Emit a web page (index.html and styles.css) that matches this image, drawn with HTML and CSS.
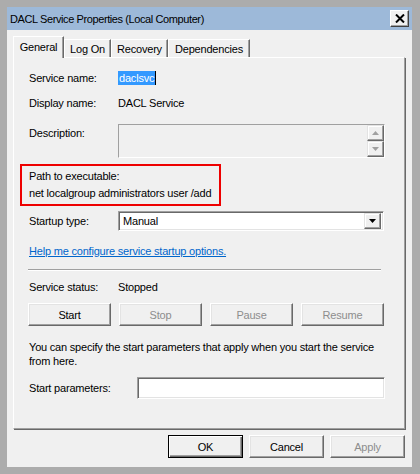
FILE: index.html
```html
<!DOCTYPE html>
<html>
<head>
<meta charset="utf-8">
<title>DACL Service Properties</title>
<link rel="stylesheet" href="styles.css">
</head>
<body>
<div class="window">
  <div class="titlebar">
    <span class="title">DACL Service Properties (Local Computer)</span>
    <span class="close"><svg width="10" height="9" viewBox="0 0 10 9"><path d="M1 0.5 L9 8.5 M9 0.5 L1 8.5" stroke="#000" stroke-width="2" fill="none"/></svg></span>
  </div>
  <div class="client">
    <div class="tabs">
      <div class="tab active t-general">General</div>
      <div class="tab t-logon">Log On</div>
      <div class="tab t-recovery">Recovery</div>
      <div class="tab t-deps">Dependencies</div>
    </div>
    <div class="page">
      <div class="row r-name">
        <span class="lbl">Service name:</span>
        <span class="sel">daclsvc</span>
      </div>
      <div class="row r-display">
        <span class="lbl">Display name:</span>
        <span>DACL Service</span>
      </div>
      <div class="row r-desc">
        <span class="lbl desc-lbl">Description:</span>
        <div class="descbox">
          <div class="spin">
            <span class="sbtn"><svg width="7" height="4" viewBox="0 0 7 4"><path d="M3.5 0 L7 4 L0 4 Z" fill="#a0a0a0"/></svg></span>
            <span class="sbtn"><svg width="7" height="4" viewBox="0 0 7 4"><path d="M0 0 L7 0 L3.5 4 Z" fill="#a0a0a0"/></svg></span>
          </div>
        </div>
      </div>
      <div class="redbox">
        <div>Path to executable:</div>
        <div>net localgroup administrators user /add</div>
      </div>
      <div class="row r-startup">
        <span class="lbl">Startup type:</span>
        <div class="combo">
          <span class="combo-text">Manual</span>
          <span class="combo-btn"><svg width="7" height="4" viewBox="0 0 7 4"><path d="M0 0 L7 0 L3.5 4 Z" fill="#000"/></svg></span>
        </div>
      </div>
      <div class="link">Help me configure service startup options.</div>
      <div class="sep"></div>
      <div class="row r-status">
        <span class="lbl">Service status:</span>
        <span>Stopped</span>
      </div>
      <div class="svc-btns">
        <span class="btn">Start</span>
        <span class="btn disabled">Stop</span>
        <span class="btn disabled">Pause</span>
        <span class="btn disabled">Resume</span>
      </div>
      <p class="para">You can specify the start parameters that apply when you start the service from here.</p>
      <div class="row r-params">
        <span class="lbl lbl-wide">Start parameters:</span>
        <div class="edit"></div>
      </div>
    </div>
    <div class="actions">
      <span class="btn dlg default">OK</span>
      <span class="btn dlg">Cancel</span>
      <span class="btn dlg disabled">Apply</span>
    </div>
  </div>
</div>
</body>
</html>
```

FILE: styles.css
```css
* { box-sizing: border-box; }
html, body { margin: 0; padding: 0; }
body {
  width: 420px;
  height: 474px;
  overflow: hidden;
  background: #acacac;
  font-family: "Liberation Sans", Arial, sans-serif;
  font-size: 11px;
  letter-spacing: -0.2px;
  color: #000;
}
.window {
  width: 420px;
  height: 474px;
  padding: 7px 8px 7px 7px;
  background: #acacac;
  display: flex;
  flex-direction: column;
}
.titlebar {
  height: 23px;
  flex: none;
  background: #9db9d9;
  display: flex;
  align-items: center;
  justify-content: space-between;
  padding: 0 3px 0 3px;
}
.title {
  font-size: 11px;
  letter-spacing: -0.4px;
}
.close {
  width: 19px;
  height: 17px;
  background: #f0f0f0;
  border: 1px solid;
  border-color: #fff #404040 #404040 #fff;
  box-shadow: inset -1px -1px 0 #a0a0a0;
  display: flex;
  align-items: center;
  justify-content: center;
}
.client {
  flex: 1;
  background: #f0f0f0;
  padding: 6px 7px 0 6px;
  display: flex;
  flex-direction: column;
}
.tabs {
  display: flex;
  align-items: flex-end;
  height: 21px;
  flex: none;
}
.tab {
  height: 18px;
  display: flex;
  align-items: center;
  justify-content: center;
  border: 1px solid;
  border-bottom: none;
  border-color: #fff #696969 transparent #fff;
  box-shadow: inset -1px 0 0 #a0a0a0;
  background: #f0f0f0;
}
.tab.active {
  height: 22px;
  margin-bottom: -1px;
  position: relative;
  z-index: 1;
  padding-bottom: 2px;
}
.t-general { width: 51px; }
.t-logon { width: 47px; }
.t-recovery { width: 57px; }
.t-deps { width: 82px; }
.page {
  height: 372px;
  flex: none;
  border: 1px solid;
  border-color: #fff #a0a0a0 #a0a0a0 #fff;
  box-shadow: 1px 1px 0 #696969;
  padding: 12px 20px 0 15px;
  display: flex;
  flex-direction: column;
}
.row {
  display: flex;
  align-items: center;
}
.lbl {
  width: 89px;
  flex: none;
}
.lbl-wide { width: 108px; }
.r-name { height: 16px; }
.sel {
  background: #3399ff;
  color: #fff;
  padding: 1px 1px 1px 1px;
  border-right: 1px solid #000;
}
.r-display { height: 16px; margin-top: 9px; }
.r-desc { height: 34px; margin-top: 13px; align-items: flex-start; }
.desc-lbl { padding-top: 2px; line-height: 14px; }
.descbox {
  width: 267px;
  height: 34px;
  flex: none;
  background: #f0f0f0;
  border: 1px solid;
  border-color: #a0a0a0 #fff #fff #a0a0a0;
  display: flex;
  justify-content: flex-end;
}
.spin {
  display: flex;
  flex-direction: column;
}
.sbtn {
  width: 17px;
  height: 16px;
  background: #f0f0f0;
  border: 1px solid;
  border-color: #e3e3e3 #696969 #696969 #e3e3e3;
  box-shadow: inset -1px -1px 0 #a0a0a0, inset 1px 1px 0 #fff;
  display: flex;
  align-items: center;
  justify-content: center;
}
.redbox {
  margin-top: 6px;
  margin-left: -9px;
  width: 201px;
  border: 2px solid #ee0000;
  padding: 2px 0 2px 7px;
  line-height: 17px;
}
.r-startup { height: 20px; margin-top: 5px; }
.combo {
  width: 266px;
  height: 20px;
  flex: none;
  background: #fff;
  border: 1px solid;
  border-color: #a0a0a0 #fff #fff #a0a0a0;
  box-shadow: inset 1px 1px 0 #696969, inset -1px -1px 0 #e3e3e3;
  display: flex;
  align-items: center;
  justify-content: space-between;
  padding: 0 2px 0 4px;
}
.combo-btn {
  width: 17px;
  height: 16px;
  background: #f0f0f0;
  border: 1px solid;
  border-color: #e3e3e3 #696969 #696969 #e3e3e3;
  box-shadow: inset -1px -1px 0 #a0a0a0, inset 1px 1px 0 #fff;
  display: flex;
  align-items: center;
  justify-content: center;
}
.link {
  margin-top: 13px;
  line-height: 14px;
  color: #0066cc;
  text-decoration: underline;
}
.sep {
  margin-top: 11px;
  margin-left: -1px;
  width: 353px;
  height: 2px;
  border-top: 1px solid #a0a0a0;
  border-bottom: 1px solid #fff;
}
.r-status { height: 14px; margin-top: 9px; }
.svc-btns {
  margin-top: 9px;
  margin-left: -1px;
  width: 356px;
  height: 23px;
  display: flex;
  justify-content: space-between;
}
.btn {
  width: 83px;
  height: 23px;
  display: flex;
  align-items: center;
  justify-content: center;
  background: #f0f0f0;
  border: 1px solid;
  border-color: #fff #696969 #696969 #fff;
  box-shadow: inset -1px -1px 0 #a0a0a0, inset 1px 1px 0 #e3e3e3;
}
.btn.disabled { color: #8d8d8d; }
.para {
  margin: 14px 0 0 0;
  line-height: 14px;
}
.r-params { height: 22px; margin-top: 9px; }
.edit {
  width: 248px;
  height: 22px;
  flex: none;
  background: #fff;
  border: 1px solid;
  border-color: #a0a0a0 #fff #fff #a0a0a0;
  box-shadow: inset 1px 1px 0 #696969, inset -1px -1px 0 #e3e3e3;
}
.actions {
  margin-top: 6px;
  display: flex;
  justify-content: flex-end;
  gap: 6px;
}
.btn.dlg { width: 75px; }
.btn.default {
  border-color: #000;
  box-shadow: inset 1px 1px 0 #fff, inset -1px -1px 0 #696969, inset -2px -2px 0 #a0a0a0;
}
```
